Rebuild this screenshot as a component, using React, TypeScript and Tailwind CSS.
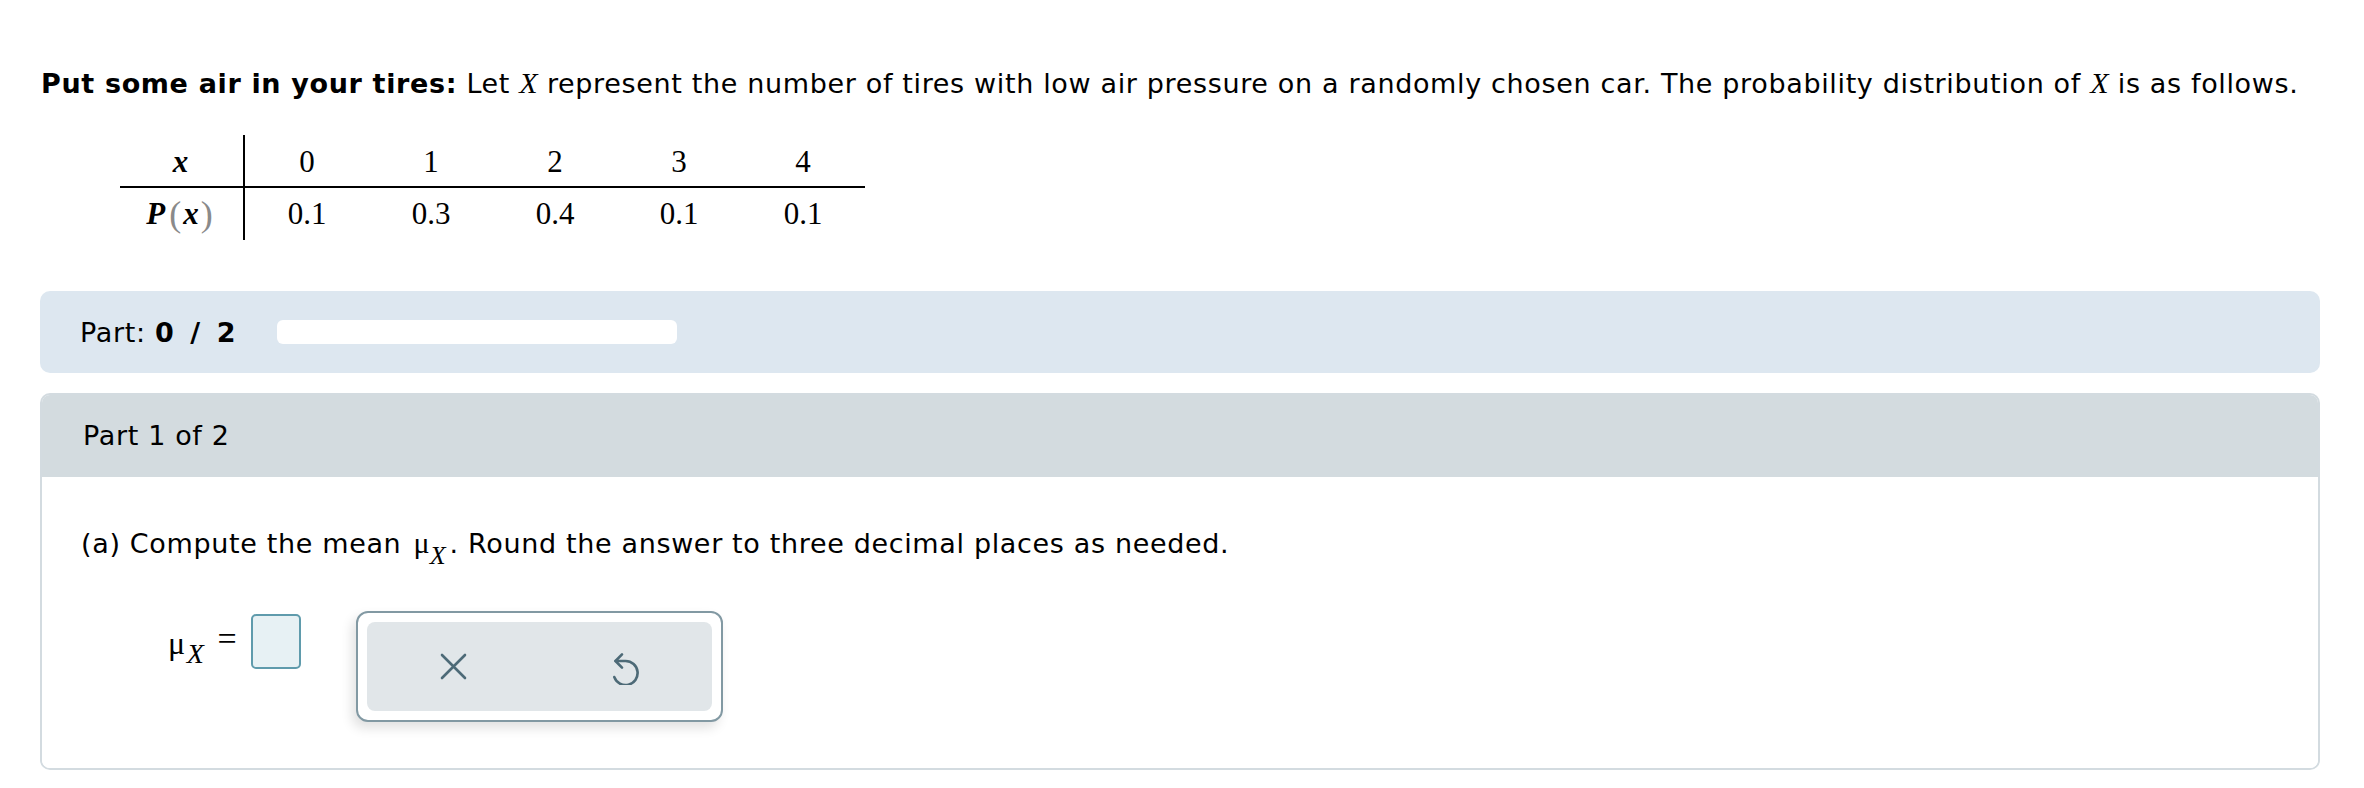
import React from "react";

const sans = { fontFamily: '"DejaVu Sans", Verdana, sans-serif' };
const serif = { fontFamily: '"Liberation Serif", "Times New Roman", serif' };

const values = [
  { x: "0", p: "0.1" },
  { x: "1", p: "0.3" },
  { x: "2", p: "0.4" },
  { x: "3", p: "0.1" },
  { x: "4", p: "0.1" },
];

const VarX = () => (
  <span className="italic text-[30px] tracking-normal" style={serif}>
    X
  </span>
);

// inline mean symbol used inside the sentence
const MuX = () => (
  <span className="ml-[3px] mr-[4px] whitespace-nowrap tracking-normal" style={serif}>
    <span className="text-[30px]">μ</span>
    <span className="relative top-[11px] text-[26px] italic">X</span>
  </span>
);

const UndoIcon = () => (
  <svg width="36" height="36" viewBox="0 0 30 30" fill="none" stroke="#4d6a77" strokeWidth="2.2" strokeLinecap="round" strokeLinejoin="round">
    <path d="M10 4.5 L4.6 10 L10 15.5" />
    <path d="M4.6 10 H13 A10 10 0 1 1 3.6 23.4" />
  </svg>
);

const CloseIcon = () => (
  <svg width="27" height="27" viewBox="0 0 27 27" fill="none" stroke="#4d6a77" strokeWidth="2.6" strokeLinecap="round">
    <path d="M2 2 L25 25 M25 2 L2 25" />
  </svg>
);

export default function App() {
  return (
    <div className="min-h-[788px] bg-white pl-[40px] pr-[44px] pt-[63px] text-[27px] tracking-[0.65px] text-black" style={sans}>
      <p className="whitespace-nowrap pl-[1px] leading-[40px]">
        <span className="font-bold">Put some air in your tires:</span> Let <VarX /> represent the
        number of tires with low air pressure on a randomly chosen car. The probability distribution
        of <VarX /> is as follows.
      </p>

      {/* distribution table */}
      <div className="ml-[80px] mt-[31px] grid w-[745px] grid-cols-[125px_repeat(5,124px)] text-[31px] tracking-normal" style={serif}>
        <div className="flex h-[53px] items-center justify-center border-b-2 border-r-2 border-black pr-[2px] pt-[4px] font-bold italic">
          x
        </div>
        {values.map((v) => (
          <div key={v.x} className="flex h-[53px] items-center justify-center border-b-2 border-black pt-[4px]">
            {v.x}
          </div>
        ))}
        <div className="flex h-[52px] items-center justify-center border-r-2 border-black pr-[4px] font-bold italic">
          P<span className="ml-[4px] mr-[2px] text-[36px] font-normal not-italic text-[#8a8a8a]">(</span>x
          <span className="ml-[2px] text-[36px] font-normal not-italic text-[#8a8a8a]">)</span>
        </div>
        {values.map((v) => (
          <div key={v.x + v.p} className="flex h-[52px] items-center justify-center">
            {v.p}
          </div>
        ))}
      </div>

      {/* progress */}
      <div className="mt-[51px] flex h-[82px] items-center rounded-[10px] bg-[#dde7f0] pl-[40px]">
        <span className="leading-none">
          Part: <span className="font-bold tracking-[3.6px]">0 / 2</span>
        </span>
        <div className="ml-[38px] h-[24px] w-[400px] rounded-[6px] bg-white" />
      </div>

      {/* part card */}
      <div className="mt-[20px] overflow-hidden rounded-[10px] border-2 border-[#d3dbe0]">
        <div className="flex h-[82px] items-center bg-[#d3dbdf] pl-[41px]">Part 1 of 2</div>
        <div className="bg-white pb-[46px] pl-[39px] pt-[46px]">
          <p className="leading-[40px]">
            (a) Compute the mean <MuX />. Round the answer to three decimal places as needed.
          </p>
          <div className="mt-[46px] flex items-start">
            <div className="ml-[87px] mt-[3px] flex h-[55px] items-center leading-none" style={serif}>
              <span className="relative top-[1px] text-[32px]">μ</span>
              <span className="relative top-[12px] ml-[1px] text-[28px] italic">X</span>
              <span className="relative top-[-3px] ml-[13px] text-[34px]">=</span>
              <div className="ml-[14px] h-[55px] w-[50px] rounded-[5px] border-2 border-[#5f9bac] bg-[#e7f1f4]" />
            </div>
            <div className="ml-[55px] h-[111px] w-[367px] rounded-[12px] border-2 border-[#8299a3] bg-white p-[9px] shadow-[-4px_6px_12px_rgba(0,0,0,0.12)]">
              <div className="grid h-full grid-cols-2 rounded-[8px] bg-[#e1e6e9]">
                <button className="flex items-center justify-center">
                  <CloseIcon />
                </button>
                <button className="flex items-center justify-center pl-[4px]">
                  <UndoIcon />
                </button>
              </div>
            </div>
          </div>
        </div>
      </div>
    </div>
  );
}
